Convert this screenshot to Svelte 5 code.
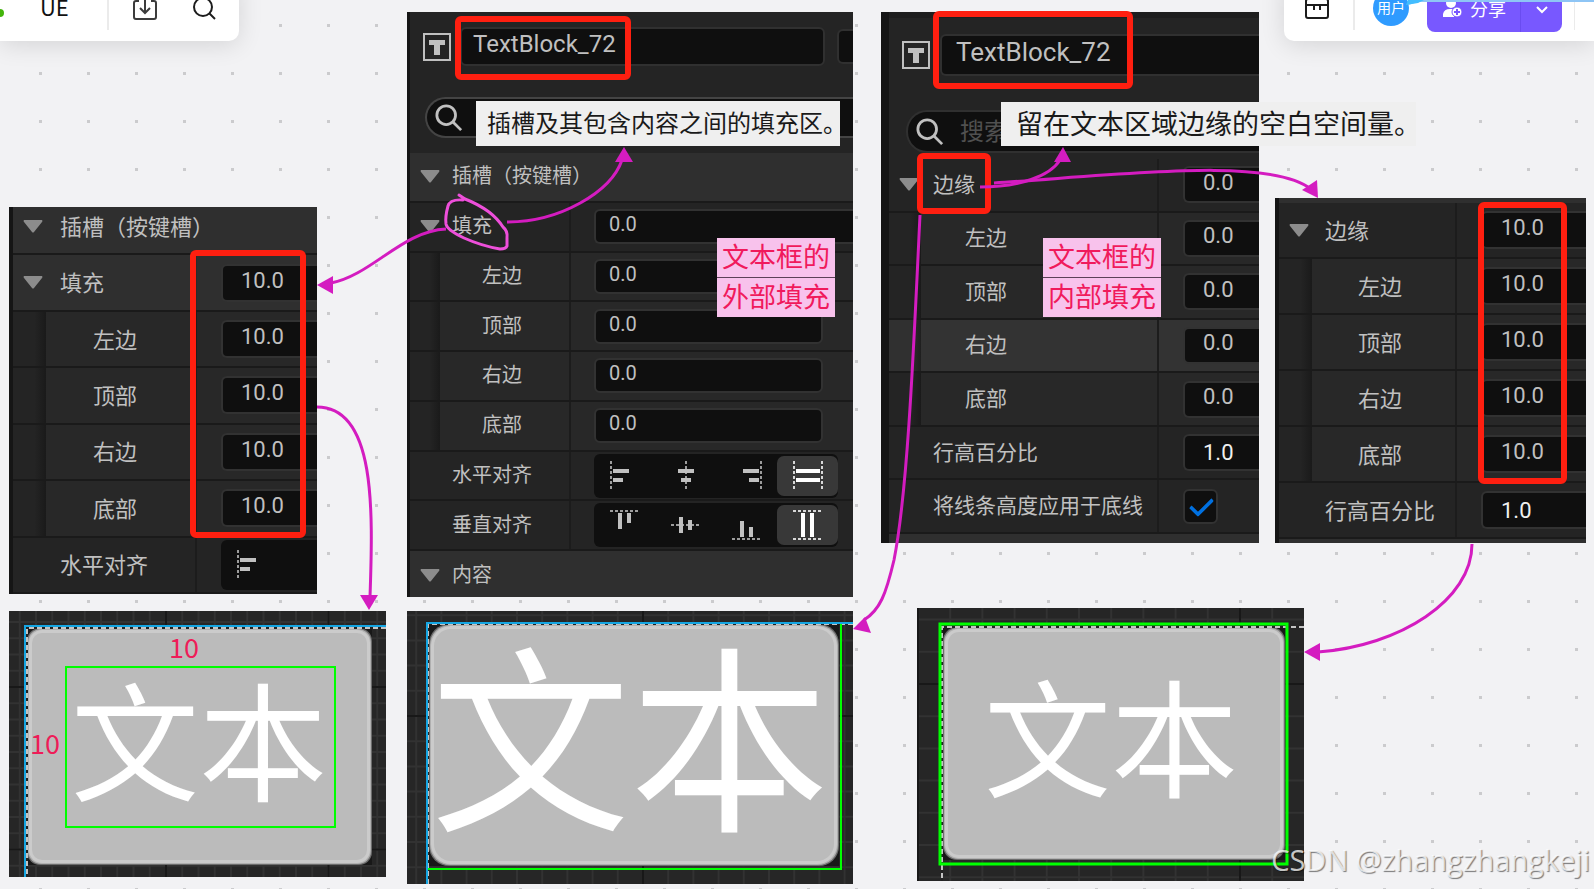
<script>
  const align = ['start', 'center', 'end', 'fill'];

  const panels = [
    {
      id: 'slot-after', x: 9, y: 207, w: 308, h: 387, edge: 4, shift: -8, foot: 0,
      font: 22, lead: 47, indent: 33, name: 184, field: 38,
      rows: [
        { kind: 'section', label: '插槽（按键槽）' },
        { kind: 'group', label: '填充', value: '10.0', lit: true, cut: true },
        { kind: 'child', label: '左边', value: '10.0', cut: true },
        { kind: 'child', label: '顶部', value: '10.0', cut: true },
        { kind: 'child', label: '右边', value: '10.0', cut: true },
        { kind: 'child', label: '底部', value: '10.0', cut: true },
        { kind: 'align', label: '水平对齐', axis: 'h', options: ['start'], cut: true }
      ]
    },
    {
      id: 'slot', x: 407, y: 12, w: 446, h: 585, edge: 3, shift: 0, foot: -4,
      font: 20, lead: 42, indent: 30, name: 161, field: 35,
      title: 'TextBlock_72', titleSize: 24, size: 'small', more: true,
      rows: [
        { kind: 'section', label: '插槽（按键槽）' },
        { kind: 'group', label: '填充', value: '0.0', cut: true },
        { kind: 'child', label: '左边', value: '0.0' },
        { kind: 'child', label: '顶部', value: '0.0' },
        { kind: 'child', label: '右边', value: '0.0' },
        { kind: 'child', label: '底部', value: '0.0' },
        { kind: 'align', label: '水平对齐', axis: 'h', options: align },
        { kind: 'align', label: '垂直对齐', axis: 'v', options: align },
        { kind: 'section', label: '内容' }
      ]
    },
    {
      id: 'margin', x: 881, y: 12, w: 378, h: 531, edge: 8, shift: 0, foot: 9,
      font: 21, lead: 44, indent: 32, name: 270, field: 37,
      title: 'TextBlock_72', titleSize: 26, size: 'large', search: '搜索',
      rows: [
        { kind: 'group', label: '边缘', value: '0.0', cut: true },
        { kind: 'child', label: '左边', value: '0.0', cut: true },
        { kind: 'child', label: '顶部', value: '0.0', cut: true },
        { kind: 'child', label: '右边', value: '0.0', cut: true, hover: true },
        { kind: 'child', label: '底部', value: '0.0', cut: true },
        { kind: 'plain', label: '行高百分比', value: '1.0', cut: true },
        { kind: 'check', label: '将线条高度应用于底线' }
      ]
    },
    {
      id: 'margin-after', x: 1275, y: 198, w: 311, h: 345, edge: 4, shift: 5, foot: 4,
      font: 22, lead: 46, indent: 33, name: 178, field: 38,
      rows: [
        { kind: 'group', label: '边缘', value: '10.0', cut: true },
        { kind: 'child', label: '左边', value: '10.0', cut: true },
        { kind: 'child', label: '顶部', value: '10.0', cut: true },
        { kind: 'child', label: '右边', value: '10.0', cut: true },
        { kind: 'child', label: '底部', value: '10.0', cut: true },
        { kind: 'plain', label: '行高百分比', value: '1.0', cut: true }
      ]
    }
  ];

  // frame = button body, text = [x, baseline, size], grid = [step, major x, major y]
  const previews = [
    {
      x: 9, y: 611, w: 377, h: 266, grid: [16.25, 157, 76], major: 162.5,
      frame: [18, 17, 345, 237, 13], dash: [18, 17],
      blue: 'M377 15H16V266', green: 'M57 56h269v160H57z', greenWidth: 2,
      text: [62, 181, 128],
      notes: [[160, 47], [21, 143]]
    },
    {
      x: 407, y: 611, w: 446, h: 273, grid: [25.2, 236, 105], major: 252,
      frame: [22, 13, 410, 242, 20], dash: [21, 13],
      blue: 'M446 12H20V273', green: 'M434 12V258H20', greenWidth: 2,
      text: [24, 205, 199],
      notes: []
    },
    {
      x: 917, y: 608, w: 387, h: 273, grid: [32.2, 323, 76], major: 322,
      frame: [26, 19, 342, 233, 14], dash: [25, 19],
      blue: '', green: 'M23 16h347v240H23z', greenWidth: 3,
      text: [67, 180, 127],
      notes: []
    }
  ];

  const marks = [
    { x: 190, y: 250, w: 116, h: 288 },
    { x: 455, y: 16, w: 176, h: 64 },
    { x: 933, y: 11, w: 200, h: 78 },
    { x: 917, y: 153, w: 74, h: 61 },
    { x: 1478, y: 202, w: 89, h: 282 }
  ];

  const tips = [
    { x: 476, y: 101, w: 364, h: 45, size: 24, pad: 11, text: '插槽及其包含内容之间的填充区。' },
    { x: 1001, y: 102, w: 415, h: 44, size: 27, pad: 15, text: '留在文本区域边缘的空白空间量。' }
  ];

  const stickers = [
    { x: 717, y: 238, lines: ['文本框的', '外部填充'] },
    { x: 1043, y: 238, lines: ['文本框的', '内部填充'] }
  ];

  const arrows = [
    { d: 'M446 229C402 231 372 275 331 283', head: '317,285 333,276 333,294' },
    { d: 'M507 222C560 222 611 192 622 160', head: '624,147 615,162 633,162' },
    { d: 'M317 407C376 407 373 510 370 597', head: '369,610 360,595 378,595' },
    { d: 'M980 187C1020 187 1050 176 1060 160', head: '1063,147 1054,162 1071,162' },
    { d: 'M994 183C1130 174 1270 157 1311 189', head: '1318,198 1302,190 1317,180' },
    { d: 'M920 215C914 340 908 490 894 560C886 594 880 610 864 620', head: '853,629 865,617 871,633' },
    { d: 'M1472 544C1472 600 1400 646 1318 652', head: '1304,652 1320,643 1320,661' }
  ];

  const positions = (start, step, limit) => {
    const list = [];
    for (let p = start % step; p < limit; p += step) list.push(p);
    return list;
  };
</script>

{#snippet alignIcon(axis, option)}
  <svg class="align-icon" viewBox="0 0 30 30" aria-hidden="true">
    <g transform={axis === 'v' ? 'matrix(0 1 1 0 0 0)' : null}>
      {#if option === 'start'}
        <path class="guide" d="M1 0v30" />
        <path d="M3 8h16v4H3zM3 17h10v4H3z" />
      {:else if option === 'center'}
        <path class="guide" d="M15 0v30" />
        <path d="M7 8h16v4H7zM10 17h10v4H10z" />
      {:else if option === 'end'}
        <path class="guide" d="M29 0v30" />
        <path d="M11 8h16v4H11zM17 17h10v4H17z" />
      {:else}
        <path class="guide" d="M1 0v30M29 0v30" />
        <path d="M3 8h24v4H3zM3 17h24v4H3z" />
      {/if}
    </g>
  </svg>
{/snippet}

<main class="board">
  <svg class="dots" aria-hidden="true">
    <defs>
      <pattern id="dot" width="48" height="48" patternUnits="userSpaceOnUse">
        <rect x="39" y="24" width="3" height="3" fill="#cbcbcd" />
      </pattern>
    </defs>
    <rect width="100%" height="100%" fill="url(#dot)" />
  </svg>

  {#each panels as panel}
    <section
      class="panel {panel.size ?? ''}"
      style="left:{panel.x}px;top:{panel.y}px;width:{panel.w}px;height:{panel.h}px;--edge:{panel.edge}px;--font:{panel.font}px;--lead:{panel.lead}px;--indent:{panel.indent}px;--name:{panel.name}px;--field:{panel.field}px"
    >
      {#if panel.title}
        <header class="head">
          <div class="title-row">
            <svg class="type-icon" viewBox="0 0 28 28" aria-hidden="true">
              <rect x="1" y="1" width="26" height="26" fill="none" stroke="#c0c0c0" stroke-width="2" />
              <path d="M6 7h16v5h-5v10h-6V12H6z" fill="#c0c0c0" />
            </svg>
            <input class="title" aria-label="名称" value={panel.title} style="font-size:{panel.titleSize}px" />
            {#if panel.more}<span class="more"></span>{/if}
          </div>
          <div class="search">
            <svg viewBox="0 0 30 30" aria-hidden="true">
              <circle cx="12" cy="12" r="10" />
              <path d="M19 19l9 9" />
            </svg>
            <input aria-label="搜索" placeholder={panel.search ?? ''} />
          </div>
        </header>
      {/if}
      <div class="rows" style="margin-top:{panel.shift}px;margin-bottom:{panel.foot}px">
        {#each panel.rows as row, i}
          <div class="row {row.kind}" class:lit={row.lit} class:hover={row.hover}>
            <div class="name">
              {#if row.kind === 'child'}<span class="indent"></span>{/if}
              <span class="lead">
                {#if row.kind === 'section' || row.kind === 'group'}
                  <svg class="caret" viewBox="0 0 20 13" aria-hidden="true">
                    <path d="M1 0h18q1 1 0 2l-8 10q-1 1-2 0L1 2q-1-1 0-2z" />
                  </svg>
                {/if}
              </span>
              {#if row.kind === 'section'}
                <h2>{row.label}</h2>
              {:else if row.kind === 'align'}
                <span class="caption">{row.label}</span>
              {:else}
                <label for="{panel.id}-{i}">{row.label}</label>
              {/if}
            </div>
            {#if row.kind === 'align'}
              <div class="value" class:cut={row.cut}>
                <div class="segments">
                  {#each row.options as option}
                    <button type="button" class:active={option === 'fill'} aria-label="{row.label} {option}">
                      {@render alignIcon(row.axis, option)}
                    </button>
                  {/each}
                </div>
              </div>
            {:else if row.kind === 'check'}
              <div class="value">
                <input type="checkbox" id="{panel.id}-{i}" checked />
              </div>
            {:else if row.kind !== 'section'}
              <div class="value" class:cut={row.cut}>
                <input class="field" id="{panel.id}-{i}" value={row.value} />
              </div>
            {/if}
          </div>
        {/each}
      </div>
    </section>
  {/each}

  {#each previews as p}
    <svg
      class="preview"
      viewBox="0 0 {p.w} {p.h}"
      style="left:{p.x}px;top:{p.y}px;width:{p.w}px;height:{p.h}px"
    >
      <rect width={p.w} height={p.h} fill="#262626" />
      {#each positions(p.grid[1], p.grid[0], p.w) as gx}
        <path class="minor" d="M{gx} 0V{p.h}" />
      {/each}
      {#each positions(p.grid[2], p.grid[0], p.h) as gy}
        <path class="minor" d="M0 {gy}H{p.w}" />
      {/each}
      {#each positions(p.grid[1], p.major, p.w) as gx}
        <path class="major" d="M{gx} 0V{p.h}" />
      {/each}
      {#each positions(p.grid[2], p.major, p.h) as gy}
        <path class="major" d="M0 {gy}H{p.w}" />
      {/each}
      <rect x={p.frame[0]} y={p.frame[1]} width={p.frame[2]} height={p.frame[3]} fill="#181818" />
      <rect x={p.frame[0]} y={p.frame[1]} width={p.frame[2]} height={p.frame[3]} rx={p.frame[4]} fill="#6c6c6c" />
      <rect x={p.frame[0] + 1} y={p.frame[1] + 1} width={p.frame[2] - 2} height={p.frame[3] - 2} rx={p.frame[4]} fill="#b0b0b0" />
      <rect x={p.frame[0] + 2} y={p.frame[1] + 2} width={p.frame[2] - 4} height={p.frame[3] - 4} rx={p.frame[4]} fill="#cbcbcb" />
      <rect x={p.frame[0] + 5} y={p.frame[1] + 5} width={p.frame[2] - 10} height={p.frame[3] - 10} rx={p.frame[4] - 3} fill="#bbb" />
      <path d="M{p.w} {p.dash[1]}H{p.dash[0]}V{p.h}" fill="none" stroke="#222" stroke-width="2" />
      <path class="dashed" d="M{p.w} {p.dash[1]}H{p.dash[0]}V{p.h}" />
      <path d={p.green} fill="none" stroke="#0f0" stroke-width={p.greenWidth} />
      {#if p.blue}<path d={p.blue} fill="none" stroke="#14a5e2" stroke-width="2" />{/if}
      <text x={p.text[0]} y={p.text[1]} font-size={p.text[2]} fill="#fff">文本</text>
      {#each p.notes as note}
        <text x={note[0]} y={note[1]} font-size="27" fill="#ee1c58">10</text>
      {/each}
    </svg>
  {/each}

  {#each tips as tip}
    <p
      class="tip"
      style="left:{tip.x}px;top:{tip.y}px;width:{tip.w}px;height:{tip.h}px;padding-left:{tip.pad}px;font-size:{tip.size}px"
    >{tip.text}</p>
  {/each}

  {#each stickers as sticker}
    <div class="sticker" style="left:{sticker.x}px;top:{sticker.y}px">
      {#each sticker.lines as line}
        <p>{line}</p>
      {/each}
    </div>
  {/each}

  {#each marks as m}
    <div class="mark" style="left:{m.x}px;top:{m.y}px;width:{m.w}px;height:{m.h}px"></div>
  {/each}

  <svg class="arrows" aria-hidden="true">
    {#each arrows as arrow}
      <path d={arrow.d} />
      <polygon points={arrow.head} />
    {/each}
    <path
      class="scribble"
      d="M459 195L465 199Q478 204 489 212Q498 219 503 227Q508 231 507 238V246Q506 249 500 249Q482 246 464 238Q447 230 446 224Q445 217 448 206Q450 199 463 200"
    />
  </svg>

  <nav class="toolbar left">
    <i class="status"></i>
    <span class="doc">UE</span>
    <i class="rule"></i>
    <button type="button" class="tool" aria-label="导出">
      <svg viewBox="0 0 24 24" stroke="#3c3c3c">
        <path d="M6 5H3q-2 0-2 2v14q0 2 2 2h18q2 0 2-2V7q0-2-2-2h-3M12 0v17M7 12l5 5 5-5" />
      </svg>
    </button>
    <button type="button" class="tool" aria-label="查找">
      <svg viewBox="0 0 24 24" stroke="#1c1c1c">
        <circle cx="11" cy="11" r="9" />
        <path d="M17 17l6 6" />
      </svg>
    </button>
  </nav>

  <nav class="toolbar right">
    <button type="button" class="tool" aria-label="日程">
      <svg viewBox="0 0 24 24" stroke="#1c1c1c">
        <rect x="1" y="3" width="22" height="19" rx="2" />
        <path d="M1 9h22M9 9v5M15 9v5" />
      </svg>
    </button>
    <i class="rule"></i>
    <span class="avatar">用户</span>
    <div class="share">
      <button type="button" class="share-main">
        <svg viewBox="0 0 20 20" aria-hidden="true">
          <circle cx="8" cy="5" r="5" fill="#fff" />
          <path d="M0 19v-3q1-5 7-5h4v8z" fill="#fff" />
          <circle cx="14" cy="14" r="5" fill="#fff" stroke="#7858ff" />
          <path d="M14 11v6M11 14h6" stroke="#7858ff" stroke-width="2" />
        </svg>
        分享
      </button>
      <button type="button" class="share-more" aria-label="更多">
        <svg viewBox="0 0 12 8" aria-hidden="true">
          <path d="M1 1l5 5 5-5" fill="none" stroke="#fff" stroke-width="2" />
        </svg>
      </button>
    </div>
    <i class="rule thin"></i>
    <svg class="beam" viewBox="0 0 190 5" preserveAspectRatio="none" aria-hidden="true">
      <path d="M4 0h186v2H14L4 5z" fill="#8ec5f5" />
      <path d="M4 0h16l-6 3-12 2z" fill="#42bdff" />
    </svg>
  </nav>

  <p class="watermark">CSDN @zhangzhangkeji</p>
</main>

<style>
  :global(body) {
    margin: 0;
    background: #f2f2f4;
  }

  .board {
    position: relative;
    min-height: 100vh;
    overflow: hidden;
    font-family: "Noto Sans CJK SC", sans-serif;
  }

  .board p,
  .board h2 {
    margin: 0;
    font-weight: 400;
  }

  .dots,
  .arrows {
    position: absolute;
    inset: 0;
    width: 100%;
    height: 100%;
  }

  .arrows {
    pointer-events: none;
  }

  input,
  button {
    box-sizing: border-box;
    margin: 0;
    font-family: inherit;
  }

  button {
    padding: 0;
    border: 0;
    background: none;
    cursor: pointer;
  }

  /* Property panels */
  .panel {
    position: absolute;
    box-sizing: border-box;
    display: flex;
    flex-direction: column;
    overflow: hidden;
    border-left: var(--edge) solid #151515;
    background: #2f2f2f;
    color: #c0c0c0;
    font-size: var(--font);
  }

  .head {
    flex: none;
    background: #242424;
  }

  .small .head {
    height: 141px;
  }

  .large .head {
    box-sizing: border-box;
    height: 147px;
    border-top: 6px solid #1e1e1e;
  }

  .title-row {
    display: flex;
    align-items: center;
    padding: 15px 0 0 13px;
  }

  .large .title-row {
    padding-top: 16px;
  }

  .type-icon {
    flex: none;
    width: 28px;
    height: 28px;
  }

  .title {
    flex: 1;
    min-width: 0;
    height: 39px;
    margin-left: 10px;
    padding: 0 14px 6px;
    border: 2px solid #303030;
    border-radius: 6px;
    background: #0f0f0f;
    color: #c0c0c0;
    font-family: Roboto, sans-serif;
  }

  .large .title {
    height: 42px;
    border-right: 0;
    border-radius: 6px 0 0 6px;
  }

  .small .title {
    margin-left: 9px;
    padding-left: 11px;
  }

  .more {
    width: 14px;
    height: 31px;
    margin-left: 12px;
    border: 2px solid #303030;
    border-right: 0;
    border-radius: 6px 0 0 6px;
    background: #0f0f0f;
  }

  .search {
    display: flex;
    align-items: center;
    gap: 16px;
    box-sizing: border-box;
    height: 41px;
    margin: 31px 0 0 15px;
    padding-left: 8px;
    border: 2px solid #444;
    border-right: 0;
    border-radius: 21px 0 0 21px;
    background: #0f0f0f;
  }

  .large .search {
    height: 43px;
    margin: 34px 0 0 17px;
    border-color: #303030;
  }

  .search svg {
    flex: none;
    width: 28px;
    height: 28px;
    fill: none;
    stroke: #c0c0c0;
    stroke-width: 3;
  }

  .search input {
    flex: 1;
    min-width: 0;
    padding: 0 0 4px;
    border: 0;
    background: none;
    color: #c0c0c0;
    font-size: 24px;
  }

  .search input::placeholder {
    color: #505050;
  }

  .rows {
    flex: 1;
    display: grid;
    grid-template-columns: minmax(0, 1fr);
    grid-auto-rows: 1fr;
  }

  .row {
    display: flex;
    box-sizing: border-box;
    min-height: 0;
    border-bottom: 2px solid #1a1a1a;
    background: #242424;
  }

  .row.section,
  .row.lit {
    background: #2f2f2f;
  }

  .row.child {
    background: #282828;
  }

  .row.hover {
    background: #333;
  }

  .name {
    flex: none;
    display: flex;
    align-items: center;
    box-sizing: border-box;
    width: var(--name);
    border-right: 2px solid #1c1c1c;
    line-height: 1;
    white-space: nowrap;
  }

  .section .name {
    border-right: 0;
  }

  .lit .name {
    border-color: #2a2a2a;
  }

  .name h2,
  .name label,
  .name .caption {
    padding-bottom: 3px;
    font-size: inherit;
  }

  .indent {
    flex: none;
    align-self: stretch;
    width: var(--indent);
    background: linear-gradient(to right, #242424 65%, #1a1a1a);
  }

  .hover .indent {
    background: linear-gradient(to right, #303030 65%, #1f1f1f);
  }

  .lead {
    flex: none;
    width: var(--lead);
  }

  .caret {
    display: block;
    width: 20px;
    height: 13px;
    margin-left: 10px;
    fill: #8c8c8c;
  }

  .value {
    flex: 1;
    min-width: 0;
    display: flex;
    align-items: center;
    padding: 0 30px 0 24px;
  }

  .value.cut {
    padding-right: 0;
  }

  .field {
    width: 100%;
    height: var(--field);
    padding: 0 18px 5px;
    border: 2px solid #323232;
    border-radius: 6px;
    background: #0f0f0f;
    color: #c0c0c0;
    font-family: Roboto, sans-serif;
    font-size: 22px;
  }

  .small .value {
    padding-left: 23px;
  }

  .small .field {
    padding-left: 13px;
    font-size: 20px;
  }

  .plain .field {
    padding-bottom: 0;
    color: #f0f0f0;
  }

  .cut .field {
    border-right: 0;
    border-radius: 6px 0 0 6px;
  }

  .segments {
    flex: none;
    display: flex;
    box-sizing: border-box;
    height: 44px;
    padding: 2px 0;
    border-radius: 6px;
    background: #0f0f0f;
  }

  .cut .segments {
    flex: 1;
    height: 50px;
    border-radius: 6px 0 0 6px;
  }

  .segments button {
    width: 61px;
    border-radius: 7px;
    color: #c0c0c0;
  }

  .segments .active {
    background: #383838;
    color: #fff;
  }

  .align-icon {
    display: block;
    width: 30px;
    height: 30px;
    margin: 0 auto;
    fill: currentColor;
  }

  .guide {
    fill: none;
    stroke: currentColor;
    stroke-width: 2;
    stroke-dasharray: 3 2;
    opacity: 0.8;
  }

  input[type="checkbox"] {
    appearance: none;
    position: relative;
    width: 35px;
    height: 35px;
    border: 2px solid #323232;
    border-radius: 6px;
    background: #0f0f0f;
  }

  input[type="checkbox"]:checked::after {
    content: "";
    position: absolute;
    left: 5px;
    top: 7px;
    width: 19px;
    height: 9px;
    border: solid #0070e0;
    border-width: 0 0 4px 4px;
    transform: rotate(-45deg);
    border-radius: 2px;
  }

  /* Viewport previews */
  .preview {
    position: absolute;
  }

  .minor {
    stroke: #323232;
    stroke-width: 2;
  }

  .major {
    stroke: #181818;
    stroke-width: 2;
  }

  .dashed {
    fill: none;
    stroke: #c4c4c4;
    stroke-width: 2;
    stroke-dasharray: 5 3;
  }

  /* Annotations */
  .tip {
    position: absolute;
    box-sizing: border-box;
    display: flex;
    align-items: center;
    padding-bottom: 4px;
    background: #efefef;
    color: #1a1a1a;
    line-height: 1;
    white-space: nowrap;
  }

  .sticker {
    position: absolute;
    display: grid;
    gap: 1px;
    background: #5c4058;
  }

  .sticker p {
    padding: 0 5px 3px;
    background: #f8c2ec;
    color: #f01a5c;
    font-size: 27px;
    line-height: 36px;
    white-space: nowrap;
  }

  .mark {
    position: absolute;
    box-sizing: border-box;
    border: 6px solid #ff1f10;
    border-radius: 6px;
  }

  .arrows path {
    fill: none;
    stroke: #d41cc0;
    stroke-width: 3;
  }

  .arrows polygon {
    fill: #d41cc0;
  }

  .arrows .scribble {
    stroke: #ee4fda;
    stroke-linecap: round;
  }

  /* Toolbars */
  .toolbar {
    position: absolute;
    top: -25px;
    display: flex;
    align-items: center;
    height: 66px;
    background: #fff;
    box-shadow: 0 4px 24px rgba(0, 0, 0, 0.12);
  }

  .toolbar.left {
    left: 0;
    padding-right: 23px;
    border-radius: 0 0 10px 0;
  }

  .toolbar.right {
    right: 0;
    padding: 0 19px 0 21px;
    border-radius: 0 0 0 10px;
  }

  .status {
    width: 4px;
    height: 8px;
    margin-top: 10px;
    border-radius: 0 4px 4px 0;
    background: #43b50b;
  }

  .doc {
    margin-left: 36px;
    padding-bottom: 4px;
    color: #111;
    font-size: 22px;
    line-height: 24px;
  }

  .rule {
    width: 2px;
    height: 43px;
    background: #ebebeb;
  }

  .left .rule {
    margin: 0 24px 0 38px;
  }

  .right .rule {
    margin: 0 18px 0 24px;
  }

  .right .rule.thin {
    width: 1px;
    margin: 0 0 0 12px;
  }

  .tool {
    width: 24px;
    height: 24px;
  }

  .tool + .tool {
    margin-left: 35px;
  }

  .tool svg {
    display: block;
    fill: none;
    stroke-width: 2;
  }

  .avatar {
    width: 36px;
    height: 36px;
    border-radius: 50%;
    background: #2f9bff;
    color: #fff;
    font-size: 14px;
    line-height: 34px;
    text-align: center;
  }

  .share {
    display: flex;
    height: 48px;
    margin-left: 18px;
    border-radius: 8px;
    background: #7858ff;
  }

  .share-main {
    display: flex;
    align-items: center;
    gap: 7px;
    width: 94px;
    padding-left: 16px;
    border-right: 1px solid #6a4cf0;
    color: #fff;
    font-size: 18px;
    line-height: 24px;
  }

  .share-main svg {
    flex: none;
    width: 20px;
    height: 20px;
  }

  .share-more {
    width: 41px;
  }

  .share-more svg {
    width: 12px;
    height: 8px;
  }

  .beam {
    position: absolute;
    top: 25px;
    right: 0;
    width: 190px;
    height: 5px;
  }

  .watermark {
    position: absolute;
    right: 4px;
    bottom: 9px;
    color: rgba(255, 255, 255, 0.75);
    font-family: "Open Sans", sans-serif;
    font-size: 29px;
    font-weight: 300;
    line-height: 40px;
    text-shadow: 1px 1px 1px rgba(0, 0, 0, 0.5);
  }
</style>
